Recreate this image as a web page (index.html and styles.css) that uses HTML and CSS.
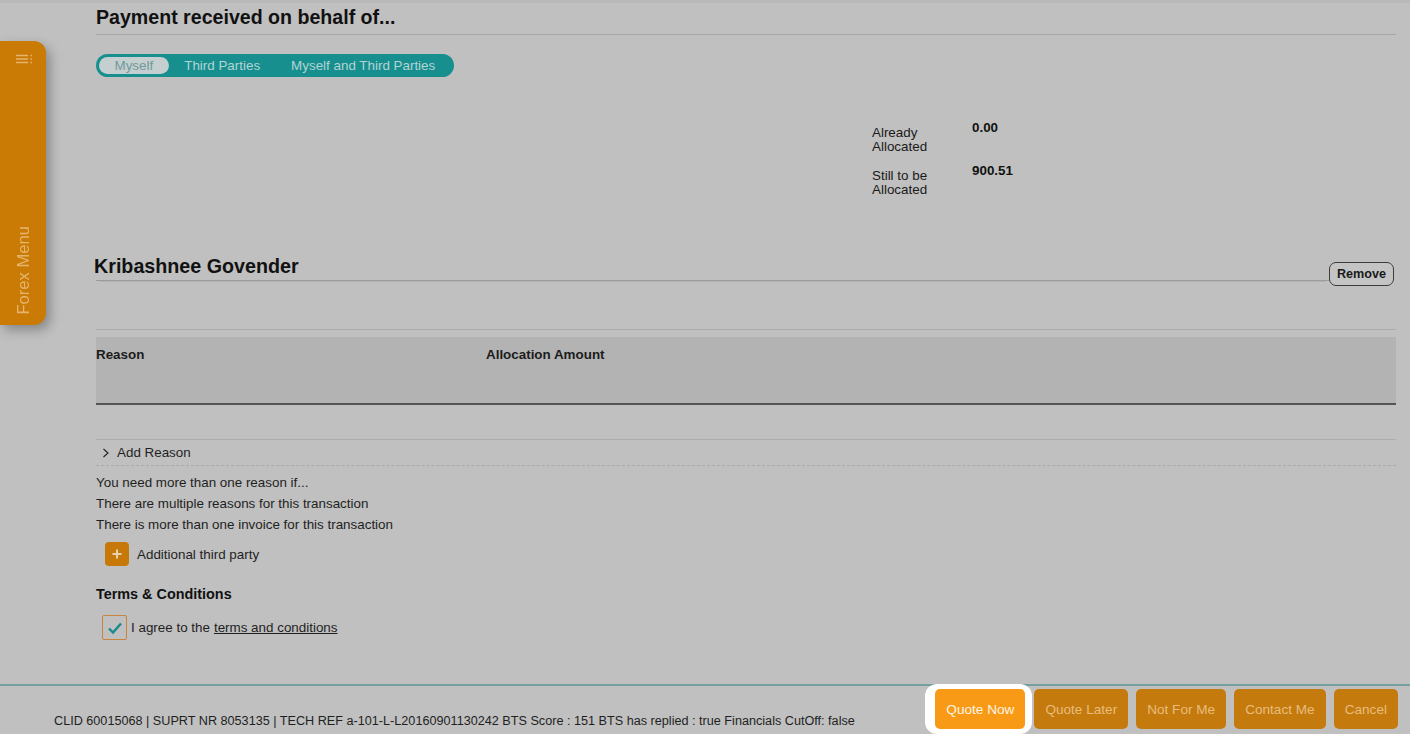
FILE: index.html
```html
<!DOCTYPE html>
<html lang="en">
  <head>
    <meta charset="UTF-8" />
    <meta name="viewport" content="width=device-width, initial-scale=1.0" />
    <title>Forex Payment</title>
    <link rel="stylesheet" href="styles.css">
  </head>

  <body>
    <aside class="forex-menu">
      <svg class="menu-icon" width="18" height="10" viewBox="0 0 18 10">
        <path d="M1 1.5h12M1 5h12M1 8.5h12" stroke="currentColor" stroke-width="1.3" fill="none" />
        <path d="M15.5 1.5h1.5M15.5 5h1.5M15.5 8.5h1.5" stroke="currentColor" stroke-width="1.3" fill="none" />
      </svg>
      <span class="menu-label">Forex Menu</span>
    </aside>

    <main class="content">
      <h2 class="section-title">Payment received on behalf of...</h2>

      <div class="toggle">
        <span class="toggle-item active">Myself</span>
        <span class="toggle-item">Third Parties</span>
        <span class="toggle-item">Myself and Third Parties</span>
      </div>

      <div class="allocation">
        <div class="alloc-row">
          <span class="alloc-label">Already<br />Allocated</span>
          <span class="alloc-value">0.00</span>
        </div>
        <div class="alloc-row">
          <span class="alloc-label">Still to be<br />Allocated</span>
          <span class="alloc-value">900.51</span>
        </div>
      </div>

      <section class="party">
        <div class="party-head">
          <h3 class="party-name">Kribashnee Govender</h3>
          <button class="remove-button">Remove</button>
        </div>

        <div class="party-body">
          <div class="reason-table">
            <div class="col-reason">Reason</div>
            <div class="col-amount">Allocation Amount</div>
          </div>

          <div class="add-reason">
            <svg class="chevron" width="8" height="10" viewBox="0 0 8 10">
              <path d="M1.5 1l4.5 4-4.5 4" stroke="currentColor" stroke-width="1.1" fill="none" />
            </svg>
            Add Reason
          </div>

          <div class="hint">
            <p>You need more than one reason if...</p>
            <p>There are multiple reasons for this transaction</p>
            <p>There is more than one invoice for this transaction</p>
          </div>

          <div class="add-party">
            <span class="plus-button">
              <svg width="12" height="12" viewBox="0 0 12 12">
                <path d="M6 1.5v9M1.5 6h9" stroke="currentColor" stroke-width="2" fill="none" />
              </svg>
            </span>
            Additional third party
          </div>

          <h4 class="terms-title">Terms &amp; Conditions</h4>
          <label class="terms">
            <span class="checkbox">
              <svg width="16" height="14" viewBox="0 0 16 14">
                <path d="M2 7.5l4 4 8-9" stroke="currentColor" stroke-width="2.4" fill="none" />
              </svg>
            </span>
            I agree to the <a href="#" class="terms-link">terms and conditions</a>
          </label>
        </div>
      </section>
    </main>

    <footer class="footer">
      <p class="footer-info">CLID 60015068 | SUPRT NR 8053135 | TECH REF a-101-L-L20160901130242 BTS Score : 151 BTS has replied : true Financials CutOff: false</p>
      <div class="actions">
        <span class="highlight"><button class="action primary">Quote Now</button></span>
        <button class="action">Quote Later</button>
        <button class="action">Not For Me</button>
        <button class="action">Contact Me</button>
        <button class="action">Cancel</button>
      </div>
    </footer>
  </body>
</html>
```

FILE: styles.css
```css
html,
body {
  margin: 0;
  height: 100%;
}

body {
  display: flex;
  flex-direction: column;
  background: #c0c0c0;
  font-family: "Liberation Sans", Arial, sans-serif;
  color: #1f1f1f;
  border-top: 3px solid #b9b9b9;
  box-sizing: border-box;
  overflow: hidden;
}

p {
  margin: 0;
}

/* side menu */
.forex-menu {
  position: fixed;
  top: 41px;
  left: 0;
  width: 46px;
  height: 284px;
  background: #c97b06;
  border-radius: 0 12px 12px 0;
  box-shadow: 4px 5px 12px rgba(0, 0, 0, 0.3);
  color: #e6b46c;
  display: flex;
  flex-direction: column;
  align-items: center;
  justify-content: space-between;
  padding: 13px 0 10px;
  box-sizing: border-box;
}

.menu-icon {
  margin-left: 2px;
}

.menu-label {
  writing-mode: vertical-rl;
  transform: rotate(180deg);
  font-size: 16.6px;
  margin-left: 2px;
}

/* main content */
.content {
  flex: 1;
  padding: 1px 14px 0 96px;
}

.section-title {
  margin: 0;
  font-size: 19.6px;
  line-height: 26px;
  color: #111;
  border-bottom: 1px solid #a6a6a6;
  padding-bottom: 4px;
}

.toggle {
  display: inline-flex;
  margin-top: 19px;
  padding: 3px;
  background: #178f8f;
  border-radius: 12px;
}

.toggle-item {
  padding: 0 15.5px;
  font-size: 13.4px;
  line-height: 17px;
  color: #b4d4d4;
}

.toggle-item.active {
  background: #c6cfcf;
  color: #6f9b9b;
  border-radius: 9px;
}

.allocation {
  margin: 43px 0 0 776px;
}

.alloc-row {
  display: flex;
  height: 43px;
}

.alloc-label {
  width: 100px;
  padding-top: 6px;
  font-size: 13.4px;
  line-height: 13.5px;
  color: #1a1a1a;
}

.alloc-value {
  font-size: 13.4px;
  font-weight: bold;
  color: #111;
}

/* third party block */
.party {
  margin-top: 48px;
}

.party-head {
  display: flex;
  align-items: flex-end;
}

.party-name {
  flex: 1;
  margin: 0;
  text-indent: -2px;
  padding-bottom: 2px;
  font-size: 19.7px;
  line-height: 24px;
  color: #111;
  border-bottom: 1px solid #9c9c9c;
  box-shadow: 0 5px 0 -4px #b0b0b0;
}

.remove-button {
  margin: 0 2px -5px 0;
  height: 24px;
  padding: 0 7px;
  font-family: inherit;
  font-size: 12.6px;
  font-weight: bold;
  color: #1a1a1a;
  background: #c4c4c4;
  border: 1px solid #3c3c3c;
  border-radius: 7px;
}

.party-body {
  margin-top: 48px;
  border-top: 1px solid #acacac;
  padding-top: 7px;
}

.reason-table {
  display: flex;
  height: 66px;
  background: #b3b3b3;
  border-bottom: 2px solid #555;
  font-size: 13.4px;
  font-weight: bold;
  color: #1c1c1c;
}

.col-reason {
  width: 390px;
  padding-top: 10px;
}

.col-amount {
  padding-top: 10px;
}

.add-reason {
  margin-top: 34px;
  border-top: 1px solid #acacac;
  border-bottom: 1px dashed #a9a9a9;
  height: 25px;
  display: flex;
  align-items: center;
  gap: 7px;
  padding-left: 6px;
  font-size: 13.4px;
  color: #1f1f1f;
}

.hint {
  margin-top: 6px;
  font-size: 13.4px;
  line-height: 21px;
  color: #1f1f1f;
}

.add-party {
  display: flex;
  align-items: center;
  gap: 8px;
  margin: 7px 0 0 9px;
  font-size: 13.4px;
}

.plus-button {
  width: 24px;
  height: 24px;
  border-radius: 4px;
  background: #c67909;
  color: #ead2b0;
  display: flex;
  align-items: center;
  justify-content: center;
}

.terms-title {
  margin: 20px 0 0;
  font-size: 14.4px;
  line-height: 17px;
  color: #111;
}

.terms {
  display: flex;
  align-items: center;
  gap: 4px;
  margin: 12px 0 0 6px;
  font-size: 13.4px;
}

.checkbox {
  width: 23px;
  height: 23px;
  border: 1px solid #c8843c;
  border-radius: 2px;
  color: #19898e;
  display: flex;
  align-items: center;
  justify-content: center;
}

.terms-link {
  color: #1f1f1f;
}

/* footer */
.footer {
  height: 50px;
  border-top: 2px solid #76a0a0;
  display: flex;
  justify-content: space-between;
  padding: 0 12px 0 54px;
  box-sizing: border-box;
}

.footer-info {
  align-self: flex-end;
  margin-bottom: 6px;
  font-size: 12.65px;
  color: #1f1f1f;
}

.actions {
  display: flex;
  align-items: flex-start;
  gap: 8px;
}

.highlight {
  margin: -2px -6px 0 0;
  padding: 5px 7px 5px 10px;
  background: #fff;
  border-radius: 12px;
}

.action {
  height: 40px;
  margin-top: 3px;
  padding: 0 11px;
  font-family: inherit;
  font-size: 13.6px;
  color: #e8bd7d;
  background: #c47a0c;
  border: none;
  border-radius: 5px;
}

.highlight .action {
  margin-top: 0;
}

.action.primary {
  background: #f89a16;
  color: #fff5e6;
}
```
